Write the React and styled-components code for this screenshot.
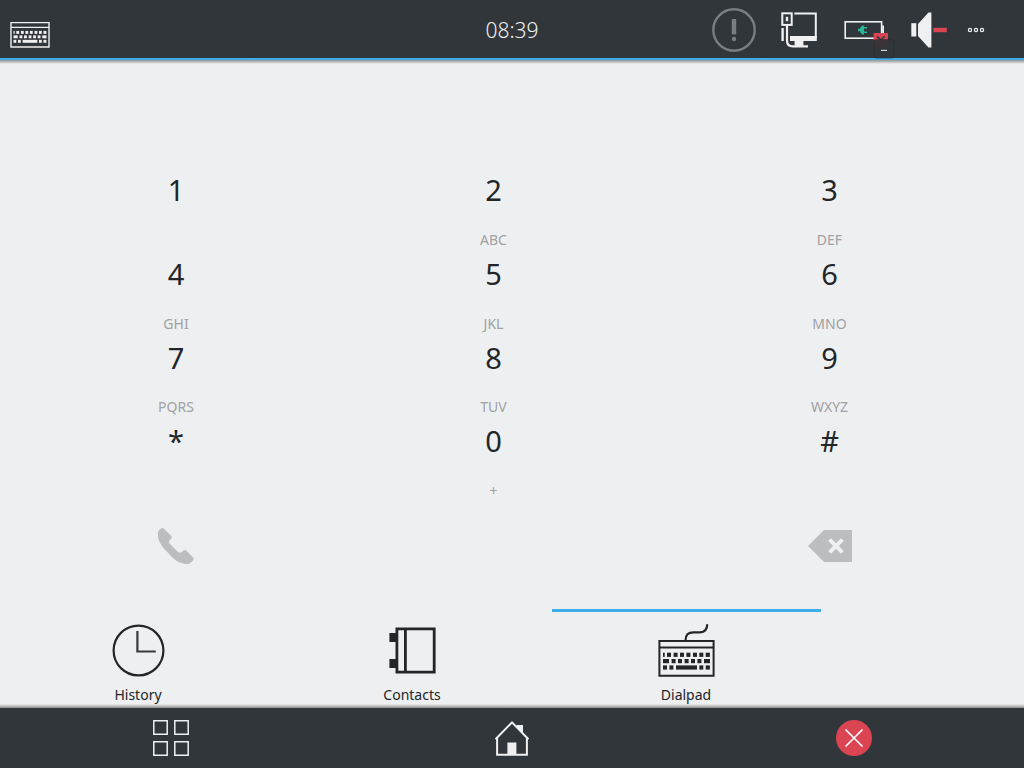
import React from 'react';
import styled, { createGlobalStyle } from 'styled-components';

const INK = '#232629';
const PAPER = '#eff0f1';
const BAR = '#31363b';
const BLUE = '#3daee9';
const RED = '#da4453';

const GlobalStyle = createGlobalStyle`
  *, *::before, *::after { box-sizing: border-box; }
  body {
    margin: 0;
    background: #eeeff1;
    color: ${INK};
    font-family: 'Noto Sans', 'Open Sans', sans-serif;
  }
  button {
    margin: 0;
    padding: 0;
    border: 0;
    background: none;
    color: inherit;
    font: inherit;
    cursor: pointer;
  }
  svg { display: block; overflow: visible; }
`;

const Screen = styled.div`
  display: flex;
  flex-direction: column;
  min-height: 100vh;
`;

const TopBar = styled.header`
  position: relative;
  display: grid;
  grid-template-columns: 1fr auto 1fr;
  align-items: center;
  height: 60px;
  padding: 0 10px;
  background: ${BAR};
  color: ${PAPER};
  border-bottom: 2px solid ${BLUE};

  &::after {
    content: '';
    position: absolute;
    left: 0;
    right: 0;
    top: 60px;
    height: 4px;
    background: linear-gradient(#8f9091, #eeeff1);
  }
`;

const KeyboardButton = styled.button`
  justify-self: start;
  && { padding-top: 12px; }
`;

const Clock = styled.time`
  padding-top: 2px;
  font-size: 21px;
  font-weight: 300;
  line-height: 28px;
`;

const Tray = styled.div`
  display: flex;
  align-items: center;
  justify-content: flex-end;
  gap: 21px;
  padding: 2px 29px 0 0;
`;

const Dialer = styled.main`
  display: flex;
  flex: 1;
  flex-direction: column;
`;

const columns = '352fr 283fr 389fr';

const Keypad = styled.div`
  display: grid;
  flex: 1;
  grid-template-columns: ${columns};
  grid-auto-rows: 1fr;
  padding-top: 105px;
`;

const Key = styled.button`
  display: flex;
  flex-direction: column;
  align-items: center;
  justify-content: space-between;
`;

const Digit = styled.span`
  font-size: 29px;
  line-height: 50px;
`;

const Letters = styled.span`
  color: #9fa1a3;
  font-size: 14px;
  line-height: 18px;
`;

const Actions = styled.div`
  display: grid;
  grid-template-columns: ${columns};
  height: 92px;
  margin-bottom: 17px;
`;

const Action = styled.button`
  display: grid;
  grid-column: ${(p) => p.$column};
  place-items: center;
  color: #bbbdbe;
`;

const Tabs = styled.div`
  display: grid;
  grid-template-columns: 269fr 269fr 269fr 198fr;
  gap: 5px;
  padding-left: 4px;
`;

const Tab = styled.button`
  display: flex;
  flex-direction: column;
  align-items: center;
  gap: 6px;
  && {
    padding: 11px 0 3px;
    border-top: 3px solid ${(p) => (p.$active ? BLUE : 'transparent')};
  }
`;

const TabLabel = styled.span`
  padding-right: 1px;
  font-size: 14px;
  line-height: 20px;
`;

const BottomBar = styled.nav`
  position: relative;
  display: grid;
  grid-template-columns: 342fr 341fr 341fr;
  height: 60px;
  background: ${BAR};
  color: ${PAPER};

  &::before {
    content: '';
    position: absolute;
    left: 0;
    right: 0;
    top: -4px;
    height: 4px;
    background: linear-gradient(#eeeff1, #8f9091);
  }
`;

const NavButton = styled.button`
  display: grid;
  place-items: center;
`;

const keyRows = [
  [12.7, [[5, 1.7], [9, 4], [15.6, 4], [22, 4], [28.4, 4], [35, 4], [41.3, 4], [47.7, 4.2]]],
  [19, [[5, 6], [13.6, 4], [20, 4], [26.6, 4], [33, 4], [39.4, 4], [46, 6]]],
  [25.4, [[5, 4], [11.4, 4], [18, 21], [41.3, 4], [47.7, 4.2]]],
];

const KeyboardBody = () => (
  <>
    <path d="M1.4 .9H55.6V35.7H1.4ZM1.4 7.6H55.6" fill="none" stroke="currentColor" strokeWidth="2" />
    {keyRows.map(([y, keys]) =>
      keys.map(([x, w]) => <rect key={`${x}-${y}`} x={x} y={y} width={w} height="4.2" fill="currentColor" />)
    )}
  </>
);

const SmallKeyboard = () => (
  <svg width="40" height="26" viewBox="0 0 57 37" aria-hidden="true"><KeyboardBody /></svg>
);

const DialpadIcon = () => (
  <svg width="57" height="56" viewBox="0 0 57 56" aria-hidden="true">
    <path d="M27.5 17.5C27.5 12 30 9.3 35.5 9.3H42C47 9.3 49.2 7 49.2 1.3" fill="none" stroke="currentColor" strokeWidth="2.2" />
    <g transform="translate(0 17)"><KeyboardBody /></g>
  </svg>
);

const HistoryIcon = () => (
  <svg width="57" height="56" viewBox="0 0 57 56" fill="none" stroke="currentColor" aria-hidden="true">
    <circle cx="28.5" cy="27.5" r="24.9" strokeWidth="2.2" />
    <path d="M27.4 8V28.5H45.8" strokeWidth="2.2" strokeOpacity=".9" />
  </svg>
);

const ContactsIcon = () => (
  <svg width="57" height="56" viewBox="0 0 57 56" aria-hidden="true">
    <path d="M12.9 5.9H50.2V49.2H12.9ZM21.4 5.9V49.2" fill="none" stroke="currentColor" strokeWidth="2.8" />
    <path d="M5.4 10H12V19H5.4ZM5.4 36H12V45H5.4Z" fill="currentColor" />
  </svg>
);

const AlertIcon = () => (
  <svg width="44" height="44" viewBox="0 0 44 44" fill="#7a7e81" role="img" aria-label="Notifications">
    <circle cx="22" cy="22" r="20.7" fill="none" stroke="#7a7e81" strokeWidth="2.4" />
    <rect x="19.8" y="11" width="4.4" height="15.4" />
    <circle cx="22" cy="31" r="2.2" />
  </svg>
);

const NetworkIcon = () => (
  <svg width="44" height="44" viewBox="0 0 44 44" fill="currentColor" role="img" aria-label="Wired network">
    <g fill="none" stroke="currentColor" strokeWidth="2">
      <rect x="5.3" y="5.3" width="9.4" height="11.6" />
      <path d="M17.3 5.4H38.8V30" />
      <path d="M10 17V32.5Q10 38.4 16 38.4H31" strokeWidth="2.2" />
    </g>
    <rect x="8.8" y="8.8" width="2.4" height="4.4" />
    <rect x="4.4" y="20" width="2.4" height="13" />
    <path d="M13 28H39.8V33H26.4V38H17.6V33H13Z" />
  </svg>
);

const BatteryIcon = () => (
  <svg width="44" height="44" viewBox="0 0 44 44" role="img" aria-label="Battery charging">
    <rect x="3.2" y="13.8" width="36.4" height="16.4" fill="none" stroke="currentColor" strokeWidth="1.6" />
    <rect x="40.2" y="17.5" width="1.8" height="8.5" fill="currentColor" />
    <path d="M16 20.8H18Q19 17.5 22 17.5V19H25V20.6H22V23.4H25V25H22V26.6Q19 26.6 18 23.2H16Z" fill="#27b999" />
    <rect x="31.6" y="25" width="14.4" height="7.4" fill={RED} />
    <path d="M35 28.2L38.8 32L42.6 28.2" fill="none" stroke={BAR} strokeWidth="1.6" />
    <rect x="31.6" y="32.4" width="14.4" height="6.6" fill="#453239" />
    <rect x="32" y="31.8" width="20" height="18" rx="2" fill={BAR} fillOpacity=".4" stroke="#2b3034" />
    <rect x="39" y="41.8" width="6" height="1.2" fill="#d6d3cb" />
  </svg>
);

const VolumeIcon = () => (
  <svg width="44" height="44" viewBox="0 0 44 44" fill="currentColor" role="img" aria-label="Volume low">
    <rect x="4.3" y="15.2" width="5" height="13.3" />
    <path d="M11 16L21.5 4.4H24.4V39.6H21.5L11 28Z" />
    <rect x="26.4" y="19.8" width="13.4" height="4.4" fill={RED} />
  </svg>
);

const MoreIcon = () => (
  <svg width="13" height="44" viewBox="0 0 13 44" fill="none" stroke="currentColor" strokeWidth="1.2" aria-hidden="true">
    <circle cx="-2" cy="22" r="1.6" />
    <circle cx="4" cy="22" r="1.6" />
    <circle cx="10" cy="22" r="1.6" />
  </svg>
);

const PhoneIcon = () => (
  <svg width="36" height="36" viewBox="0 0 110 110" fill="currentColor" aria-hidden="true">
    <path d="M10 1Q14-1 18 2L41 25Q44 29 40 32L35 38Q32 42 35 47L62 74Q67 77 72 74L78 69Q82 66 86 69L108 91Q110 95 107 99Q98 110 86 110Q66 109 48 94L16 60Q1 42 0 24V13Q3 5 10 1Z" />
  </svg>
);

const BackspaceIcon = () => (
  <svg width="44" height="32" viewBox="0 0 44 32" aria-hidden="true">
    <path d="M0 16L16 0H44V32H16Z" fill="currentColor" />
    <path d="M21.6 9.6L34.4 22.4M34.4 9.6L21.6 22.4" stroke={PAPER} strokeWidth="4" />
  </svg>
);

const AppsIcon = () => (
  <svg width="36" height="36" viewBox="0 0 36 36" fill="none" stroke="currentColor" strokeWidth="1.5" aria-hidden="true">
    <path d="M.8 .8H14.2V14.2H.8ZM21.8 .8H35.2V14.2H21.8ZM.8 21.8H14.2V35.2H.8ZM21.8 21.8H35.2V35.2H21.8Z" />
  </svg>
);

const HomeIcon = () => (
  <svg width="36" height="36" viewBox="0 0 36 36" aria-hidden="true">
    <path d="M.5 19.2L17 2.4L33.5 19.2M2.1 18V34.8H31.9V18" fill="none" stroke="currentColor" strokeWidth="2" />
    <path d="M21.4 5H28V13L21.4 7ZM12.4 22.4H21.4V35H12.4Z" fill="currentColor" />
  </svg>
);

const CloseIcon = () => (
  <svg width="36" height="36" viewBox="0 0 36 36" aria-hidden="true">
    <circle cx="18" cy="18" r="18" fill={RED} />
    <path d="M9.5 9.5L26.5 26.5M26.5 9.5L9.5 26.5" stroke="#fff" strokeWidth="1.7" />
  </svg>
);

const keys = [
  ['1', ''], ['2', 'ABC'], ['3', 'DEF'],
  ['4', 'GHI'], ['5', 'JKL'], ['6', 'MNO'],
  ['7', 'PQRS'], ['8', 'TUV'], ['9', 'WXYZ'],
  ['*', ''], ['0', '+'], ['#', ''],
];

const tabs = [
  ['History', HistoryIcon],
  ['Contacts', ContactsIcon],
  ['Dialpad', DialpadIcon],
];

export default function App() {
  const [active, setActive] = React.useState('Dialpad');

  return (
    <Screen>
      <GlobalStyle />
      <TopBar>
        <KeyboardButton aria-label="On-screen keyboard"><SmallKeyboard /></KeyboardButton>
        <Clock>08:39</Clock>
        <Tray>
          <AlertIcon />
          <NetworkIcon />
          <BatteryIcon />
          <VolumeIcon />
          <button aria-label="More"><MoreIcon /></button>
        </Tray>
      </TopBar>
      <Dialer>
        <Keypad>
          {keys.map(([digit, letters]) => (
            <Key key={digit}>
              <Digit>{digit}</Digit>
              <Letters>{letters}</Letters>
            </Key>
          ))}
        </Keypad>
        <Actions>
          <Action $column={1} aria-label="Call"><PhoneIcon /></Action>
          <Action $column={3} aria-label="Backspace"><BackspaceIcon /></Action>
        </Actions>
        <Tabs role="tablist">
          {tabs.map(([label, Icon]) => (
            <Tab
              key={label}
              role="tab"
              aria-selected={active === label}
              $active={active === label}
              onClick={() => setActive(label)}
            >
              <Icon />
              <TabLabel>{label}</TabLabel>
            </Tab>
          ))}
        </Tabs>
      </Dialer>
      <BottomBar>
        <NavButton aria-label="Applications"><AppsIcon /></NavButton>
        <NavButton aria-label="Home"><HomeIcon /></NavButton>
        <NavButton aria-label="Close"><CloseIcon /></NavButton>
      </BottomBar>
    </Screen>
  );
}
